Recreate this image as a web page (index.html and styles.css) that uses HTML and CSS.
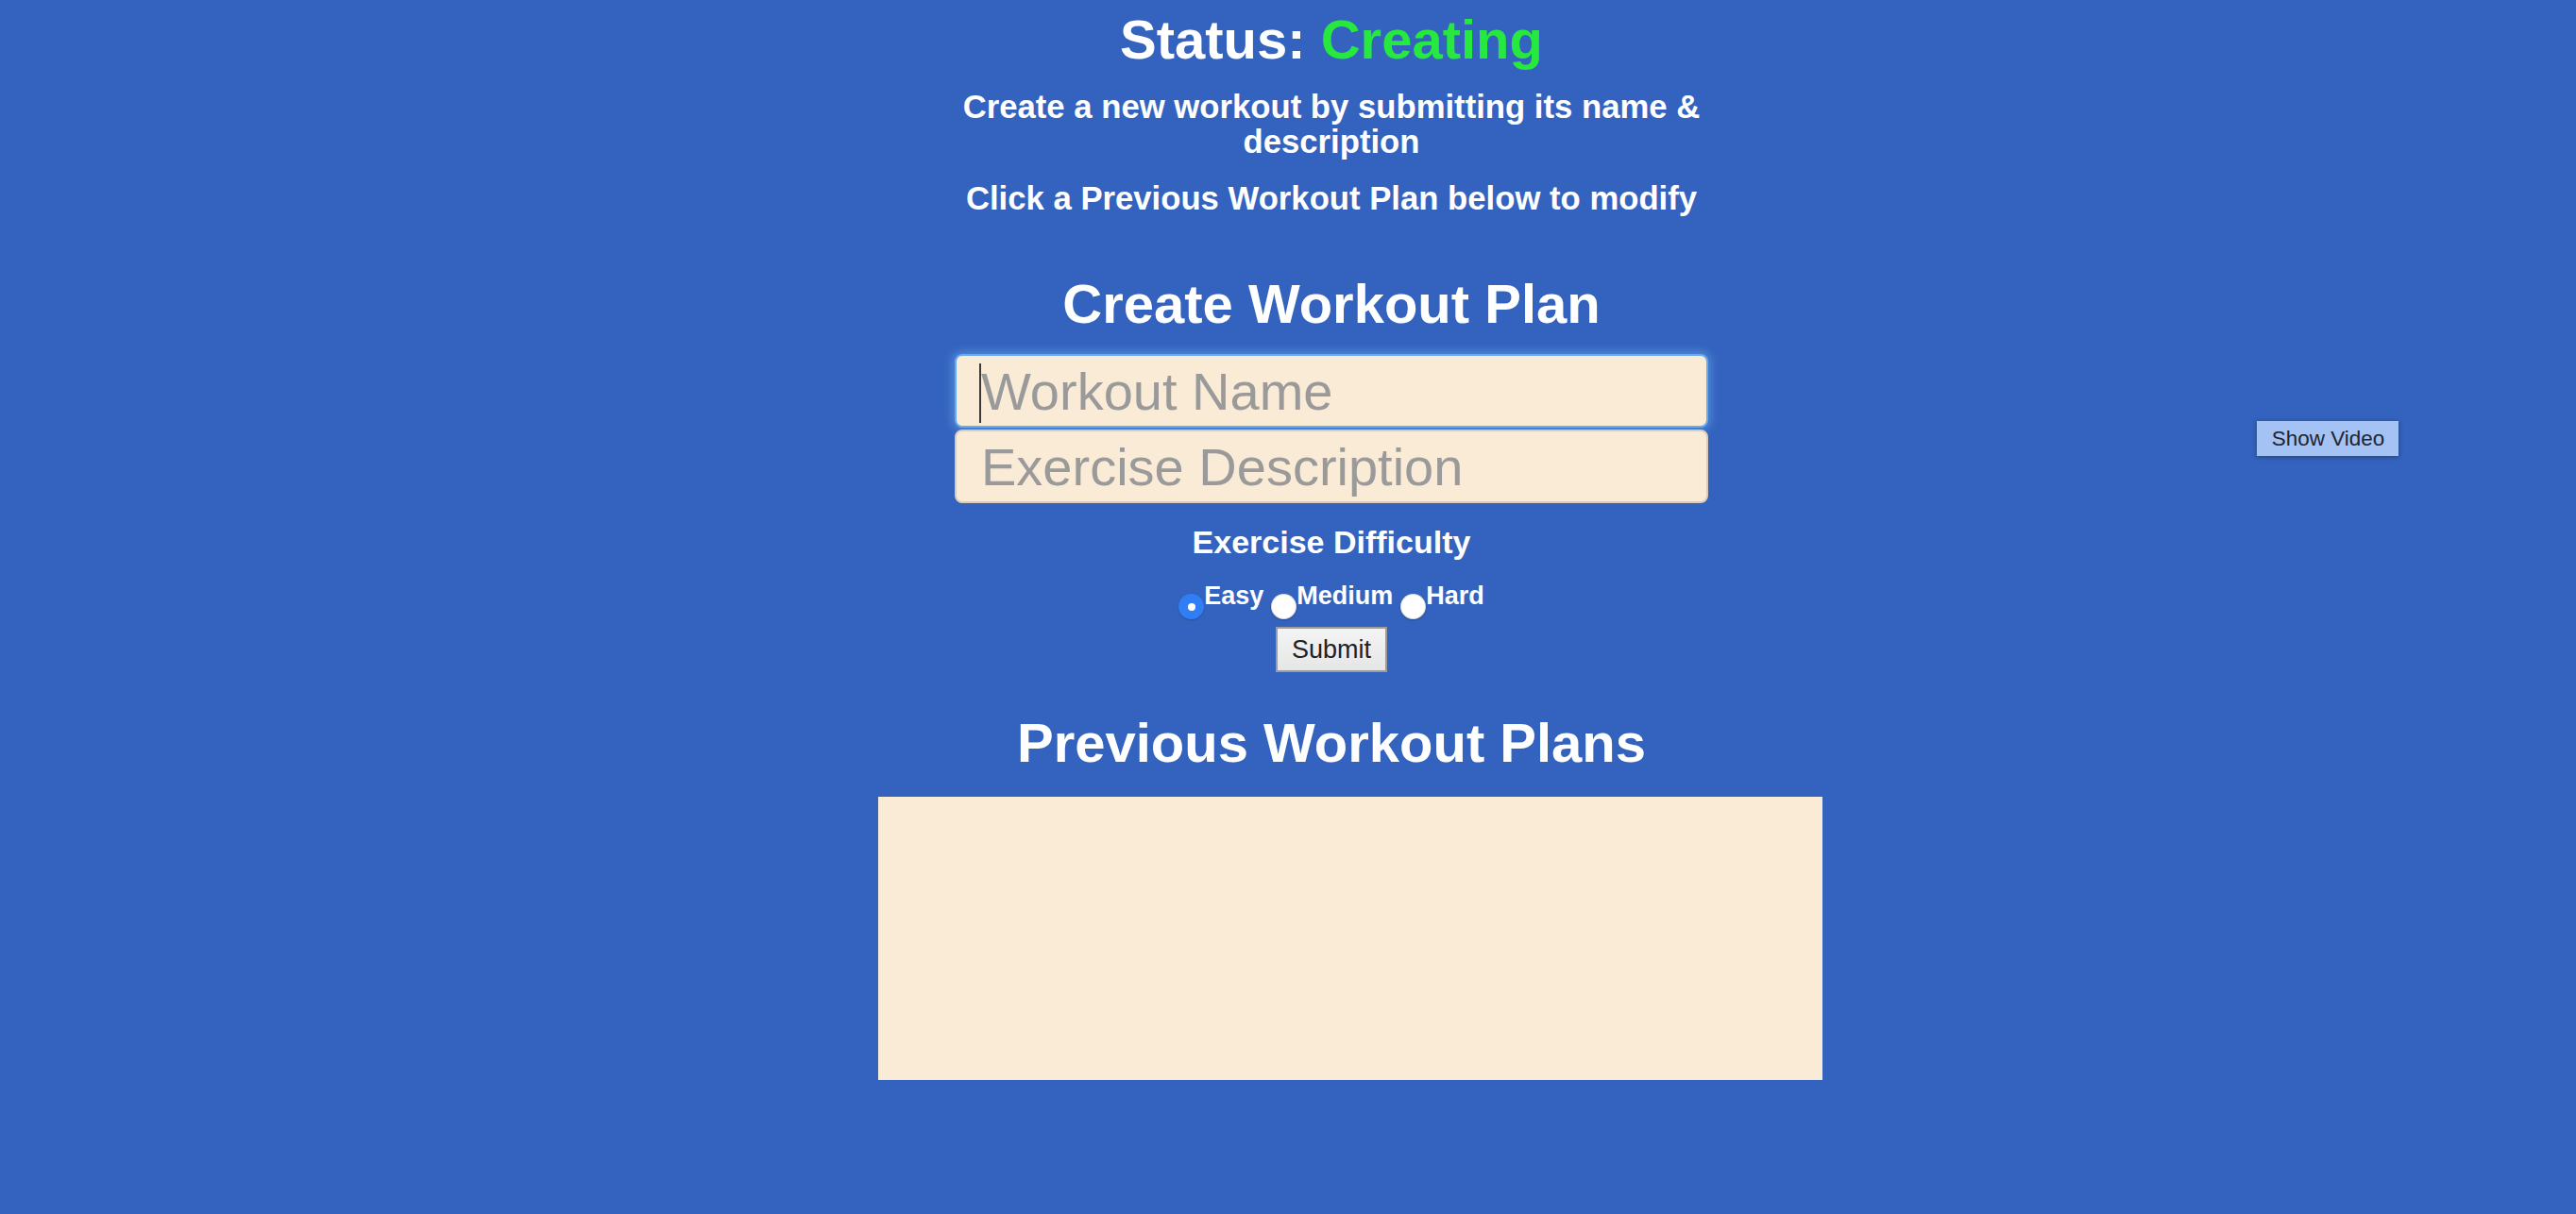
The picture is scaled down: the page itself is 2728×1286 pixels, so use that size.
FILE: index.html
```html
<!DOCTYPE html>
<html lang="en">
<head>
<meta charset="utf-8">
<title>Workout Planner</title>
<link rel="stylesheet" href="styles.css">
</head>
<body>
<div class="page">
  <main class="main">
    <h1 class="title">Status: <span class="status">Creating</span></h1>
    <p class="hint hint-first">Create a new workout by submitting its name &amp; description</p>
    <p class="hint hint-second">Click a Previous Workout Plan below to modify</p>

    <h1 class="title title-create">Create Workout Plan</h1>
    <form class="form">
      <div class="field field-focus">
        <input class="text-input focused" type="text" placeholder="Workout Name">
        <span class="caret"></span>
      </div>
      <div class="field">
        <input class="text-input" type="text" placeholder="Exercise Description">
      </div>
      <div class="difficulty-label">Exercise Difficulty</div>
      <div class="radios">
        <input class="radio" type="radio" name="diff" checked><span class="radio-text">Easy</span><span class="sp"></span><input class="radio" type="radio" name="diff"><span class="radio-text">Medium</span><span class="sp"></span><input class="radio" type="radio" name="diff"><span class="radio-text">Hard</span>
      </div>
      <button class="submit" type="button">Submit</button>
    </form>

    <h1 class="title title-prev">Previous Workout Plans</h1>
    <div class="plans"></div>
  </main>
  <aside class="side">
    <button class="video-btn" type="button">Show Video</button>
  </aside>
</div>
</body>
</html>
```

FILE: styles.css
```css
html, body {
  margin: 0;
  padding: 0;
  background: #3363be;
  height: 100%;
}

body {
  font-family: "Liberation Sans", Arial, Helvetica, sans-serif;
  color: #ffffff;
}

.page {
  display: flex;
  align-items: flex-start;
  min-height: 1286px;
}

.main {
  width: 960px;
  margin-left: 930px;
  padding-top: 9px;
  display: flex;
  flex-direction: column;
  align-items: center;
  text-align: center;
}

.title {
  margin: 0;
  font-size: 58px;
  line-height: 66px;
  font-weight: bold;
  color: #ffffff;
}

.status {
  color: #26e83e;
}

.hint {
  margin: 0;
  font-size: 34.7px;
  line-height: 37px;
  font-weight: bold;
  width: 100%;
}

.hint-first {
  margin-top: 20px;
}

.hint-second {
  margin-top: 23px;
}

.title-create {
  margin-top: 60px;
}

.form {
  display: flex;
  flex-direction: column;
  align-items: center;
  margin-top: 20px;
}

.field {
  position: relative;
  width: 798px;
  height: 78px;
  margin-bottom: 2px;
}

.text-input {
  box-sizing: border-box;
  width: 100%;
  height: 100%;
  margin: 0;
  padding: 0 26px;
  border: 2px solid #d9cdbd;
  border-radius: 8px;
  background: #faebd7;
  font-family: "Liberation Sans", Arial, Helvetica, sans-serif;
  font-size: 56px;
  color: #333333;
  outline: none;
}

.text-input::placeholder {
  color: #9a9a9a;
}

.text-input.focused {
  border-color: #66acee;
  box-shadow: 0 0 10px 3px rgba(120, 180, 245, 0.45);
}

.caret {
  position: absolute;
  left: 26px;
  top: 10px;
  width: 2px;
  height: 63px;
  background: #3a3a3a;
}

.difficulty-label {
  margin-top: 20px;
  font-size: 34px;
  line-height: 38px;
  font-weight: bold;
}

.radios {
  display: flex;
  align-items: flex-start;
  margin-top: 23px;
  height: 40px;
}

.radio {
  -webkit-appearance: none;
  appearance: none;
  box-sizing: border-box;
  width: 27px;
  height: 27px;
  margin: 13px 0 0 0;
  border-radius: 50%;
  background: #ffffff;
  box-shadow: inset 0 0 0 1px rgba(0, 0, 0, 0.14), 0 1px 2px rgba(0, 0, 0, 0.25);
  position: relative;
}

.radio:checked {
  background: #2f7ef5;
  box-shadow: 0 1px 2px rgba(0, 0, 0, 0.2);
}

.radio:checked::after {
  content: "";
  position: absolute;
  left: 9.5px;
  top: 9.5px;
  width: 8px;
  height: 8px;
  border-radius: 50%;
  background: #ffffff;
}

.radio-text {
  font-size: 27px;
  line-height: 31px;
  font-weight: bold;
}

.sp {
  width: 8px;
}

.submit {
  margin-top: 8px;
  box-sizing: border-box;
  width: 118px;
  height: 48px;
  padding: 0;
  border: 2px solid #9c9c9c;
  border-radius: 0;
  background: linear-gradient(#f4f4f4, #e6e6e6);
  font-family: "Liberation Sans", Arial, Helvetica, sans-serif;
  font-size: 27px;
  color: #222222;
}

.title-prev {
  margin-top: 42px;
}

.plans {
  align-self: flex-start;
  width: 1000px;
  height: 300px;
  margin-top: 24px;
  background: #faebd7;
}

.side {
  margin-left: 500px;
  padding-top: 446px;
}

.video-btn {
  box-sizing: border-box;
  width: 150px;
  height: 37px;
  padding: 0 0 0 1px;
  border: none;
  border-radius: 0;
  background: #a4c2f4;
  box-shadow: 0 1px 5px rgba(0, 0, 0, 0.35);
  font-family: "Liberation Sans", Arial, Helvetica, sans-serif;
  font-size: 22.5px;
  color: #1e2530;
}
```
